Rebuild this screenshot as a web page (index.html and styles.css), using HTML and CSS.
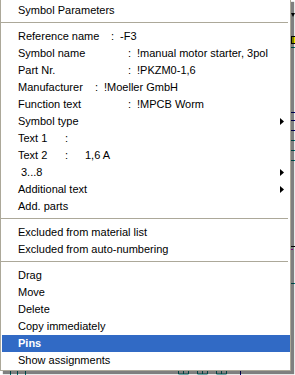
FILE: index.html
```html
<!DOCTYPE html>
<html lang="en">

<head>
    <meta charset="UTF-8">
    <meta name="viewport" content="width=device-width, initial-scale=1.0">
    <title>Symbol Parameters</title>
    <link rel="stylesheet" href="styles.css">
</head>

<body>
    <!-- drawing canvas behind the popup menu -->
    <svg class="canvas" width="295" height="375" viewBox="0 0 295 375">
        <polygon points="291,13 295,13 293,17" fill="#000" />
        <rect x="291.5" y="36.5" width="5" height="7" fill="#ffff00" stroke="#000" />
        <line x1="291" y1="47.5" x2="295" y2="47.5" stroke="#008080" />
        <line x1="291" y1="112.5" x2="295" y2="112.5" stroke="#000080" />
        <line x1="291" y1="120.5" x2="295" y2="120.5" stroke="#000080" />
        <line x1="291" y1="130.5" x2="295" y2="130.5" stroke="#000080" />
        <line x1="291" y1="140.5" x2="295" y2="140.5" stroke="#008080" />
        <line x1="291" y1="150.5" x2="295" y2="150.5" stroke="#008080" />
        <line x1="291" y1="160.5" x2="295" y2="160.5" stroke="#008080" />
        <line x1="291" y1="246.5" x2="295" y2="246.5" stroke="#000" />
        <line x1="291" y1="249.5" x2="293" y2="249.5" stroke="#ff00ff" />
        <line x1="291" y1="283.5" x2="295" y2="283.5" stroke="#008080" />
        <path d="M10.5 371v4M17.5 371v4M25.5 371v4" stroke="#008080" />
        <path d="M178.5 370v4h10v-4M183.5 370v4M197.5 370v4h10v-4M202.5 370v4M216.5 370v4h10v-4M221.5 370v4"
            stroke="#008080" fill="none" />
        <line x1="240.5" y1="370" x2="240.5" y2="375" stroke="#000080" />
    </svg>

    <div class="menu">
        <div class="item">Symbol Parameters</div>
        <div class="sep"></div>
        <div class="item"><span class="key k_ref">Reference name</span><span class="colon">:</span>-F3</div>
        <div class="item"><span class="key k_long">Symbol name</span><span class="colon">:</span>!manual motor starter, 3pol</div>
        <div class="item"><span class="key k_long">Part Nr.</span><span class="colon">:</span>!PKZM0-1,6</div>
        <div class="item"><span class="key k_man">Manufacturer</span><span class="colon">:</span>!Moeller GmbH</div>
        <div class="item"><span class="key k_long">Function text</span><span class="colon">:</span>!MPCB Worm</div>
        <div class="item">Symbol type<span class="sub"></span></div>
        <div class="item"><span class="key k_text">Text 1</span><span class="colon">:</span></div>
        <div class="item"><span class="key k_text">Text 2</span><span class="colon wide">:</span>1,6 A</div>
        <div class="item indent">3...8<span class="sub"></span></div>
        <div class="item">Additional text<span class="sub"></span></div>
        <div class="item">Add. parts</div>
        <div class="sep"></div>
        <div class="item">Excluded from material list</div>
        <div class="item">Excluded from auto-numbering</div>
        <div class="sep"></div>
        <div class="item">Drag</div>
        <div class="item">Move</div>
        <div class="item">Delete</div>
        <div class="item">Copy immediately</div>
        <div class="item active">Pins</div>
        <div class="item">Show assignments</div>
    </div>
</body>

</html>
```

FILE: styles.css
```css
* {
    margin: 0;
    padding: 0;
}

body {
    position: relative;
    width: 295px;
    height: 375px;
    overflow: hidden;
    background-color: #fff;
    font-family: "Liberation Sans", Arial, sans-serif;
    font-size: 11px;
    color: #000;
}

.canvas {
    position: absolute;
    left: 0;
    top: 0;
}

.menu {
    position: relative;
    box-sizing: border-box;
    width: 291px;
    margin-top: -1px;
    padding: 2px 0 1px 1px;
    border: 1px solid #aca899;
    background-color: #fff;
    box-shadow: 3px 3px 1px rgba(0, 0, 0, 0.5);
}

.item {
    display: flex;
    align-items: center;
    height: 17px;
    line-height: 17px;
    padding: 0 6px 0 16px;
    white-space: nowrap;
}

.indent {
    padding-left: 19px;
}

.key {
    display: inline-block;
}

.k_ref {
    width: 93px;
}

.k_long {
    width: 110px;
}

.k_man {
    width: 77px;
}

.k_text {
    width: 47px;
}

.colon {
    display: inline-block;
    width: 9px;
}

.colon.wide {
    width: 20px;
}

.sub {
    width: 4px;
    height: 7px;
    margin-left: auto;
    background-color: #000;
    clip-path: polygon(0 0, 100% 50%, 0 100%);
}

.sep {
    height: 1px;
    margin: 3px 2px 5px -1px;
    background-color: #aca899;
}

.active {
    background-color: #316ac5;
    color: #fff;
    font-weight: bold;
}
```
